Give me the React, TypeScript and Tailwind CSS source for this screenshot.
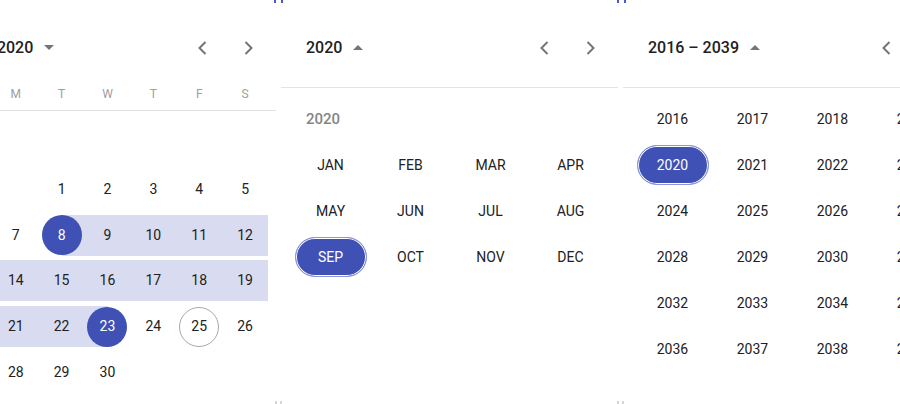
import { FC } from 'react'

const ROW = 'h-[45.7px]'

const Caret: FC<{ up?: boolean }> = ({ up }) => (
  <svg width="10" height="5" viewBox="0 0 10 5" className="ml-[11px] shrink-0">
    {up ? <path d="M0 5 L5 0 L10 5 Z" fill="#757575" /> : <path d="M0 0 L5 5 L10 0 Z" fill="#757575" />}
  </svg>
)

const Chevron: FC<{ dir: 'left' | 'right' }> = ({ dir }) => (
  <div className="w-10 h-10 flex items-center justify-center">
    <svg width="24" height="24" viewBox="0 0 24 24">
      <polyline
        points={dir === 'left' ? '14.5,6 8.5,12 14.5,18' : '9.5,6 15.5,12 9.5,18'}
        fill="none"
        stroke="#757575"
        strokeWidth="2"
      />
    </svg>
  </div>
)

const Header: FC<{ label: string; up?: boolean }> = ({ label, up }) => (
  <div className="h-[70px] pt-[25px] flex items-center justify-between">
    <div className="flex items-center pl-[17px] text-[16px] font-medium text-[#212121]">
      <span>{label}</span>
      <Caret up={up} />
    </div>
    <div className="flex gap-[5px]">
      <Chevron dir="left" />
      <Chevron dir="right" />
    </div>
  </div>
)

const Divider = () => <div className="h-px bg-[#e3e3e3] -mx-2" />

// day view -----------------------------------------------------------------
const weeks: (number | null)[][] = [
  [null, null, 1, 2, 3, 4, 5],
  [6, 7, 8, 9, 10, 11, 12],
  [13, 14, 15, 16, 17, 18, 19],
  [20, 21, 22, 23, 24, 25, 26],
  [27, 28, 29, 30, null, null, null],
]
const rangeStart = 8
const rangeEnd = 23
const today = 25

const DayCell: FC<{ day: number | null }> = ({ day }) => {
  if (day === null) return <div className={ROW} />
  const inRange = day >= rangeStart && day <= rangeEnd
  const isEdge = day === rangeStart || day === rangeEnd
  return (
    <div className={`${ROW} relative flex items-center justify-center`}>
      {inRange && (
        <div
          className={`absolute h-[41px] bg-[#d9dcf0] ${
            day === rangeStart ? 'left-1/2 right-0' : day === rangeEnd ? 'left-0 right-1/2' : 'left-0 right-0'
          }`}
        />
      )}
      <div
        className={`relative w-10 h-10 rounded-full flex items-center justify-center text-[14px] ${
          isEdge
            ? 'bg-[#3f51b5] text-white'
            : day === today
              ? 'border border-[#a8a8a8] text-[#212121]'
              : 'text-[#212121]'
        }`}
      >
        {day}
      </div>
    </div>
  )
}

const MonthView = () => (
  <div className="w-[337px] shrink-0 px-2">
    <Header label="SEP 2020" />
    <div className="pt-[7px] h-10 grid grid-cols-7 items-center text-[12px] text-[#9e9e9e]">
      {['S', 'M', 'T', 'W', 'T', 'F', 'S'].map((d, i) => (
        <div key={i} className="text-center">
          {d}
        </div>
      ))}
    </div>
    <Divider />
    <div className="pt-[10px]">
      <div className={`${ROW} flex items-center pl-[8px] text-[14px] font-medium text-[#757575]`}>SEP</div>
      {weeks.map((w, i) => (
        <div key={i} className="grid grid-cols-7">
          {w.map((d, j) => (
            <DayCell key={j} day={d} />
          ))}
        </div>
      ))}
    </div>
  </div>
)

// year view ----------------------------------------------------------------
const Pill: FC<{ text: string; selected?: boolean }> = ({ text, selected }) => (
  <div className="h-[46px] flex items-center justify-center">
    <div
      className={`w-[72px] h-10 rounded-full flex items-center justify-center text-[14px] ${
        selected
          ? 'bg-[#3f51b5] text-white border border-[#8c97d4] shadow-[inset_0_0_0_1px_#ffffff]'
          : 'text-[#212121]'
      }`}
    >
      {text}
    </div>
  </div>
)

const months = ['JAN', 'FEB', 'MAR', 'APR', 'MAY', 'JUN', 'JUL', 'AUG', 'SEP', 'OCT', 'NOV', 'DEC']

const YearView = () => (
  <div className="w-[337px] shrink-0 px-2">
    <Header label="2020" up />
    <div className="pt-[17px]" />
    <Divider />
    <div className="pt-2">
      <div className="h-[46px] flex items-center pl-[17px] text-[15px] font-medium text-[#858585]">2020</div>
      <div className="grid grid-cols-[repeat(4,80px)] ml-[1.5px]">
        {months.map((m) => (
          <Pill key={m} text={m} selected={m === 'SEP'} />
        ))}
      </div>
    </div>
  </div>
)

const years = Array.from({ length: 24 }, (_, i) => 2016 + i)

const MultiYearView = () => (
  <div className="w-[337px] shrink-0 px-2">
    <Header label="2016 – 2039" up />
    <div className="pt-[17px]" />
    <Divider />
    <div className="pt-2 grid grid-cols-[repeat(4,80px)] ml-[1.5px]">
      {years.map((y) => (
        <Pill key={y} text={String(y)} selected={y === 2020} />
      ))}
    </div>
  </div>
)

const Mark: FC<{ className: string }> = ({ className }) => (
  <span className={`absolute w-[2px] h-[3px] ${className}`} />
)

export default function App() {
  return (
    <div className="relative w-[900px] h-[404px] overflow-hidden bg-white font-['Roboto',sans-serif]">
      <div className="flex gap-[5px] ml-[-61px]">
        <MonthView />
        <YearView />
        <MultiYearView />
      </div>
      <Mark className="top-0 left-[274px] bg-[#4a5bc4]" />
      <Mark className="top-0 left-[281px] bg-[#4a5bc4]" />
      <Mark className="top-0 left-[617px] bg-[#4a5bc4]" />
      <Mark className="top-0 left-[624px] bg-[#4a5bc4]" />
      <Mark className="bottom-0 left-[275px] bg-[#d6d6d6]" />
      <Mark className="bottom-0 left-[280px] bg-[#d6d6d6]" />
      <Mark className="bottom-0 left-[617px] bg-[#d6d6d6]" />
      <Mark className="bottom-0 left-[622px] bg-[#d6d6d6]" />
    </div>
  )
}
